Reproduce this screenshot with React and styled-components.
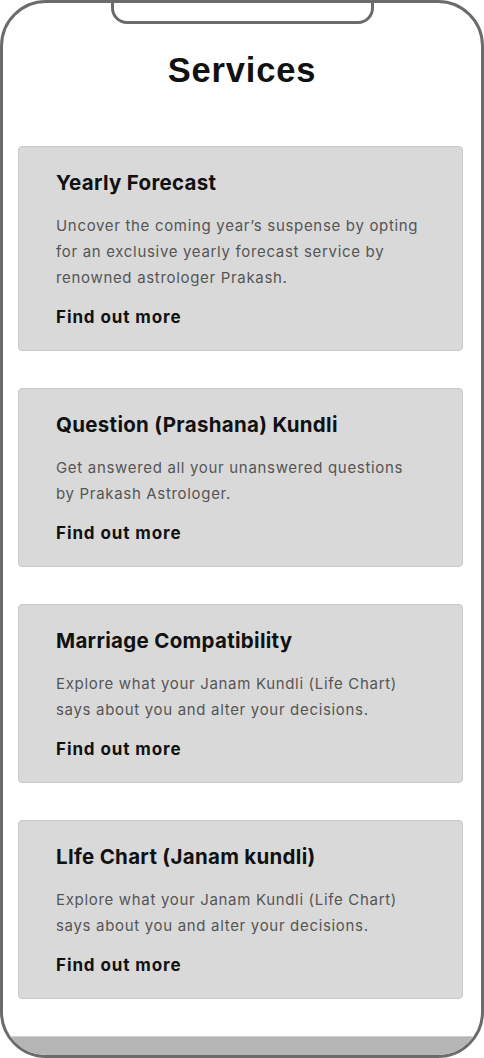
import React from 'react';
import styled, { createGlobalStyle } from 'styled-components';

const GlobalStyle = createGlobalStyle`
  * {
    box-sizing: border-box;
  }
  body {
    margin: 0;
    background: #ffffff;
    font-family: Inter, "Noto Sans", sans-serif;
  }
`;

const PhoneFrame = styled.div`
  position: relative;
  width: 484px;
  height: 1058px;
  border: 3px solid #6b6b6b;
  border-radius: 46px;
  overflow: hidden;
  background: #ffffff;
  display: flex;
  flex-direction: column;
`;

const Notch = styled.div`
  position: absolute;
  top: -20px;
  left: 108px;
  width: 263px;
  height: 41px;
  border: 3px solid #6b6b6b;
  border-radius: 16px;
  background: #ffffff;
`;

const Title = styled.h1`
  margin: 47px 0 0;
  text-align: center;
  font-family: "Liberation Sans", Arial, sans-serif;
  font-weight: 700;
  font-size: 34.5px;
  line-height: 40px;
  letter-spacing: 0.8px;
  color: #111111;
`;

const CardList = styled.div`
  display: flex;
  flex-direction: column;
  gap: 37px;
  margin-top: 56px;
  padding: 0 18px 0 15px;
`;

const Card = styled.div`
  background: #d9d9d9;
  border: 1px solid #c9c9c9;
  border-radius: 4px;
  padding: 24px 37px 22px;
`;

const CardTitle = styled.h2`
  margin: 0;
  font-size: 20.5px;
  line-height: 24px;
  font-weight: 700;
  letter-spacing: 0.3px;
  color: #111111;
`;

const CardText = styled.p`
  margin: 18px 0 0;
  font-size: 15px;
  line-height: 26px;
  letter-spacing: 0.68px;
  color: #555555;
`;

const MoreLink = styled.a`
  display: block;
  margin-top: 15px;
  font-size: 17px;
  line-height: 22px;
  font-weight: 700;
  letter-spacing: 0.9px;
  color: #111111;
  text-decoration: none;
`;

const Footer = styled.div`
  margin-top: 37px;
  flex: 1;
  background: #b5b5b5;
  box-shadow: inset 0 1px 0 #cfcfcf;
`;

const services = [
  {
    title: 'Yearly Forecast',
    text: "Uncover the coming year’s suspense by opting for an exclusive yearly forecast service by renowned astrologer Prakash.",
  },
  {
    title: 'Question (Prashana) Kundli',
    text: 'Get answered all your unanswered questions by Prakash Astrologer.',
  },
  {
    title: 'Marriage Compatibility',
    text: 'Explore what your Janam Kundli (Life Chart) says about you and alter your decisions.',
  },
  {
    title: 'LIfe Chart (Janam kundli)',
    text: 'Explore what your Janam Kundli (Life Chart) says about you and alter your decisions.',
  },
];

const App = () => {
  return (
    <>
      <GlobalStyle />
      <PhoneFrame>
        <Notch />
        <Title>Services</Title>
        <CardList>
          {services.map((s) => (
            <Card key={s.title}>
              <CardTitle>{s.title}</CardTitle>
              <CardText>{s.text}</CardText>
              <MoreLink href="#">Find out more</MoreLink>
            </Card>
          ))}
        </CardList>
        <Footer />
      </PhoneFrame>
    </>
  );
};

export default App;
